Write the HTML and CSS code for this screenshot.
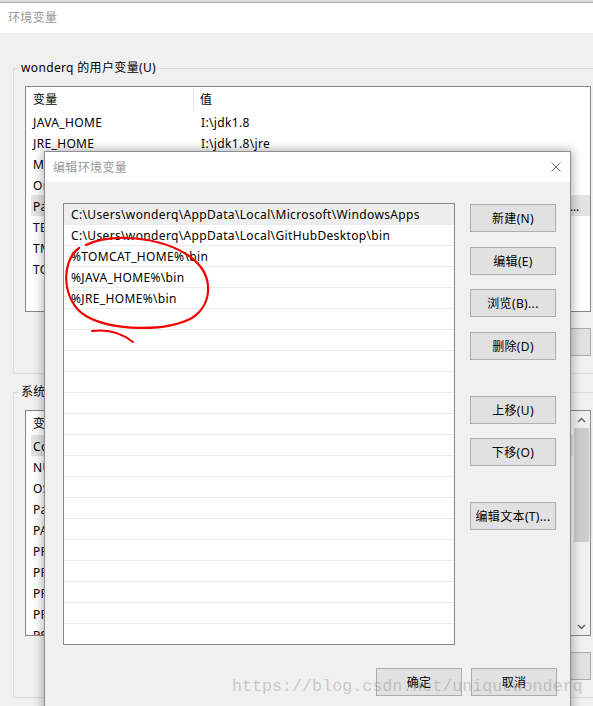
FILE: index.html
```html
<!DOCTYPE html>
<html lang="zh-CN">
<head>
<meta charset="utf-8">
<title>环境变量</title>
<link rel="stylesheet" href="styles.css">
</head>
<body>
<div class="bgwin">
  <div class="bg-title">环境变量</div>
  <div class="bg-body">
    <fieldset class="group">
      <legend>wonderq 的用户变量(U)</legend>
      <div class="lv">
        <div class="lv-main">
          <div class="lv-head"><span class="h1">变量</span><span class="h2">值</span></div>
          <div class="lv-row"><span class="c1">JAVA_HOME</span><span class="c2">I:\jdk1.8</span></div>
          <div class="lv-row"><span class="c1">JRE_HOME</span><span class="c2">I:\jdk1.8\jre</span></div>
          <div class="lv-row"><span class="c1">MOZ_PLUGIN_PATH</span><span class="c2">C:\Program Files (x86)\Foxit Software\Foxit Reader\plugins\</span></div>
          <div class="lv-row"><span class="c1">OneDrive</span><span class="c2">C:\Users\wonderq\OneDrive</span></div>
          <div class="lv-row sel"><span class="c1">Path</span><span class="c2">C:\Users\wonderq\AppData\Local\Microsoft\WindowsApps;C:\Users\wonderq\AppData\Local\GitHubDesktop\bin;%TOMCAT_HOME%\bin;%JAVA_HOME%\bin;%JRE_HOME%\bin</span></div>
          <div class="lv-row"><span class="c1">TEMP</span><span class="c2">C:\Users\wonderq\AppData\Local\Temp</span></div>
          <div class="lv-row"><span class="c1">TMP</span><span class="c2">C:\Users\wonderq\AppData\Local\Temp</span></div>
          <div class="lv-row"><span class="c1">TOMCAT_HOME</span><span class="c2">I:\apache-tomcat-8.5</span></div>
        </div>
      </div>
      <div class="btnrow"><div class="btn bgbtn">新建(N)...</div><div class="btn bgbtn">编辑(E)...</div><div class="btn bgbtn">删除(D)</div></div>
    </fieldset>

    <fieldset class="group group2">
      <legend>系统变量(S)</legend>
      <div class="lv">
        <div class="lv-main">
          <div class="lv-head"><span class="h1">变量</span><span class="h2">值</span></div>
          <div class="lv-row sel"><span class="c1">ComSpec</span><span class="c2">C:\WINDOWS\system32\cmd.exe</span></div>
          <div class="lv-row"><span class="c1">NUMBER_OF_PROCESSORS</span><span class="c2">4</span></div>
          <div class="lv-row"><span class="c1">OS</span><span class="c2">Windows_NT</span></div>
          <div class="lv-row"><span class="c1">Path</span><span class="c2">C:\ProgramData\Oracle\Java\javapath;C:\WINDOWS\system32</span></div>
          <div class="lv-row"><span class="c1">PATHEXT</span><span class="c2">.COM;.EXE;.BAT;.CMD;.VBS;.VBE;.JS;.JSE;.WSF;.WSH;.MSC</span></div>
          <div class="lv-row"><span class="c1">PROCESSOR_ARCHITECTURE</span><span class="c2">AMD64</span></div>
          <div class="lv-row"><span class="c1">PROCESSOR_IDENTIFIER</span><span class="c2">Intel64 Family 6 Model 142</span></div>
          <div class="lv-row"><span class="c1">PROCESSOR_LEVEL</span><span class="c2">6</span></div>
          <div class="lv-row"><span class="c1">PROCESSOR_REVISION</span><span class="c2">8e09</span></div>
          <div class="lv-row"><span class="c1">PSModulePath</span><span class="c2">%ProgramFiles%\WindowsPowerShell\Modules</span></div>
        </div>
        <div class="sb">
          <div class="sb-arrow"><svg width="9" height="6" viewBox="0 0 9 6"><path d="M1 5 L4.5 1.5 L8 5" fill="none" stroke="#606060" stroke-width="1.4"/></svg></div>
          <div class="sb-thumb"></div>
          <div class="sb-track"></div>
          <div class="sb-arrow"><svg width="9" height="6" viewBox="0 0 9 6"><path d="M1 1 L4.5 4.5 L8 1" fill="none" stroke="#606060" stroke-width="1.4"/></svg></div>
        </div>
      </div>
      <div class="btnrow"><div class="btn bgbtn">新建(W)...</div><div class="btn bgbtn">编辑(I)...</div><div class="btn bgbtn">删除(L)</div></div>
    </fieldset>
  </div>
</div>

<div class="dialog">
  <div class="dlg-title">
    <span>编辑环境变量</span>
    <svg class="close" width="10" height="10" viewBox="0 0 10 10"><path d="M0.5 0.5 L9.5 9.5 M9.5 0.5 L0.5 9.5" stroke="#6e6e6e" stroke-width="1"/></svg>
  </div>
  <div class="dlg-body">
    <div class="dlg-list">
      <div class="dlg-row sel">C:\Users\wonderq\AppData\Local\Microsoft\WindowsApps</div>
      <div class="dlg-row">C:\Users\wonderq\AppData\Local\GitHubDesktop\bin</div>
      <div class="dlg-row">%TOMCAT_HOME%\bin</div>
      <div class="dlg-row">%JAVA_HOME%\bin</div>
      <div class="dlg-row">%JRE_HOME%\bin</div>
      <div class="dlg-row"></div>
      <div class="dlg-row"></div>
      <div class="dlg-row"></div>
      <div class="dlg-row"></div>
      <div class="dlg-row"></div>
      <div class="dlg-row"></div>
      <div class="dlg-row"></div>
      <div class="dlg-row"></div>
      <div class="dlg-row"></div>
      <div class="dlg-row"></div>
      <div class="dlg-row"></div>
      <div class="dlg-row"></div>
      <div class="dlg-row"></div>
      <div class="dlg-row"></div>
      <div class="dlg-row"></div>
      <div class="dlg-row"></div>
    </div>
    <div class="dlg-btns">
      <div class="btn b-first">新建(N)</div>
      <div class="btn b-s15">编辑(E)</div>
      <div class="btn b-s14">浏览(B)...</div>
      <div class="btn b-s15">删除(D)</div>
      <div class="btn b-l">上移(U)</div>
      <div class="btn b-s14">下移(O)</div>
      <div class="btn b-l">编辑文本(T)...</div>
    </div>
  </div>
  <div class="dlg-foot">
    <div class="btn">确定</div>
    <div class="btn">取消</div>
  </div>
</div>

<svg class="annot" width="593" height="706" viewBox="0 0 593 706">
  <path d="M86 245 C 110 233, 160 236, 189 256 C 215 274, 213 304, 192 318 C 166 332, 112 331, 86 316 C 62 302, 60 262, 79 248" fill="none" stroke="#f20000" stroke-width="2.2" stroke-linecap="round"/>
  <path d="M92 331 C 108 329, 122 333, 133 342" fill="none" stroke="#f20000" stroke-width="2" stroke-linecap="round"/>
</svg>

<div class="watermark">https://blog.csdn.net/uniquewonderq</div>
</body>
</html>
```

FILE: styles.css
```css
* { box-sizing: border-box; }
html, body { margin: 0; padding: 0; }
body {
  width: 593px;
  height: 706px;
  overflow: hidden;
  position: relative;
  background: #dcdcdc;
  font-family: "Noto Sans", "Noto Sans CJK SC", sans-serif;
  font-size: 12px;
  letter-spacing: 0.35px;
  color: #000;
}

/* background window */
.bgwin {
  width: 616px;
  height: 704px;
  margin-top: 2px;
  border-top: 1px solid #a9a9a9;
  background: #f0f0f0;
  overflow: hidden;
}
.bg-title {
  height: 30px;
  line-height: 30px;
  padding-left: 8px;
  background: #fff;
  color: #999;
}
.bg-body { padding: 27px 0 0 13px; }

.group {
  margin: 0;
  width: 590px;
  min-width: 0;
  padding: 0 11px 17px 11px;
  border: 1px solid #dcdcdc;
}
.group2 { margin-top: 10px; }
.group legend {
  padding: 0 2px;
  margin-left: -6px;
  line-height: 16px;
}

.lv {
  margin-top: 10px;
  width: 566px;
  height: 226px;
  border: 1px solid #828790;
  background: #fff;
  display: flex;
  overflow: hidden;
}
.lv-main { flex: 1; min-width: 0; }
.lv-head { display: flex; height: 24px; align-items: center; }
.h1 { width: 168px; padding-left: 7px; border-right: 1px solid #e5e5e5; line-height: 23px; }
.h2 { padding-left: 6px; }
.lv-row { display: flex; height: 21px; align-items: center; padding-top: 1px; margin-left: 5px; white-space: nowrap; }
.lv-row.sel { background: #e3e3e3; }
.c1 { width: 163px; flex: none; padding-left: 2px; overflow: hidden; }
.c2 { flex: 1; min-width: 0; padding: 0 6px 0 7px; overflow: hidden; text-overflow: ellipsis; }

.sb { width: 17px; flex: none; display: flex; flex-direction: column; background: #f0f0f0; }
.sb-arrow { height: 17px; display: flex; align-items: center; justify-content: center; }
.sb-thumb { height: 114px; margin: 0 1px; background: #cdcdcd; }
.sb-track { flex: 1; }

.btnrow { display: flex; justify-content: flex-end; gap: 8px; margin-top: 16px; }
.btn {
  height: 28px;
  width: 86px;
  border: 1px solid #adadad;
  background: #e1e1e1;
  display: flex;
  align-items: center;
  justify-content: center;
  white-space: nowrap;
  flex: none;
}
.bgbtn { width: 96px; }

/* dialog window */
.dialog {
  position: absolute;
  left: 44px;
  top: 151px;
  width: 527px;
  height: 600px;
  border: 1px solid #8f8f8f;
  background: #f0f0f0;
  box-shadow: 0 0 10px 1px rgba(0, 0, 0, 0.32);
}
.dlg-title {
  height: 30px;
  background: #fff;
  display: flex;
  align-items: center;
  justify-content: space-between;
  padding: 0 9px 0 8px;
  color: #999;
}
.dlg-body { display: flex; gap: 15px; padding: 21px 13px 0 18px; }
.dlg-list {
  width: 392px;
  height: 442px;
  flex: none;
  border: 1px solid #828790;
  background: #fff;
  overflow: hidden;
}
.dlg-row {
  height: 21px;
  line-height: 22px;
  padding-left: 7px;
  border-bottom: 1px solid #ececec;
  white-space: nowrap;
}
.dlg-row.sel { background: #eeeeee; }
.dlg-btns { display: flex; flex-direction: column; }
.b-first { margin-top: 1px; }
.b-s15 { margin-top: 15px; }
.b-s14 { margin-top: 14px; }
.b-l { margin-top: 36px; }
.dlg-foot { display: flex; justify-content: flex-end; gap: 9px; padding: 23px 13px 0 0; }

/* overlays */
.annot { position: absolute; left: 0; top: 0; pointer-events: none; }
.watermark {
  position: absolute;
  left: 232px;
  top: 677px;
  font-family: "Liberation Mono", monospace;
  font-size: 16.7px;
  letter-spacing: 0;
  line-height: 20px;
  color: rgba(120, 120, 120, 0.35);
  white-space: nowrap;
  pointer-events: none;
}
```
